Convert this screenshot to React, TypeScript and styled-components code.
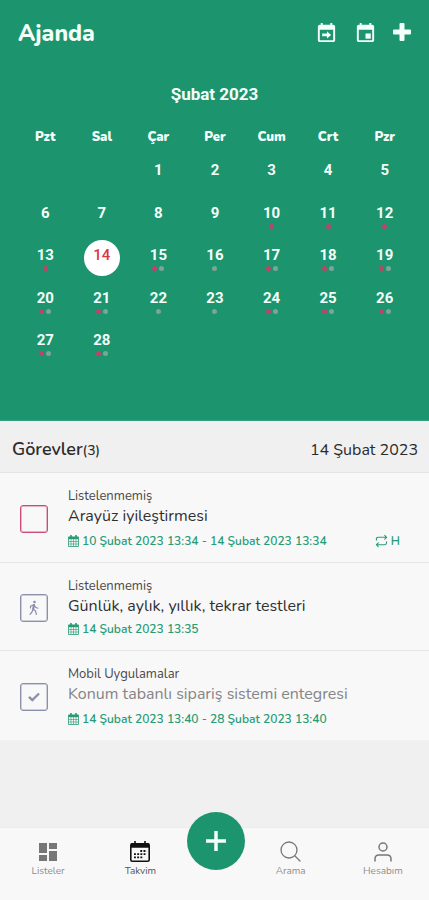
import React from "react";
import styled, { createGlobalStyle } from "styled-components";

const GlobalStyle = createGlobalStyle`
  *, *::before, *::after { box-sizing: border-box; }
  body { margin: 0; background: #f0f0f0; font-family: Nunito, "Open Sans", "Noto Sans", sans-serif; }
  button { font: inherit; color: inherit; background: none; border: 0; padding: 0; cursor: pointer; }
  h1, h2, p, ul { margin: 0; padding: 0; }
  svg { display: block; }
`;

const Page = styled.div`
  display: flex;
  flex-direction: column;
  min-height: 100vh;
`;

const CalendarPanel = styled.header`
  padding-bottom: 59px;
  background: #1c946e;
  color: #f4fffa;
  border-bottom: 1px solid #34a07d;
`;

const TopBar = styled.div`
  display: flex;
  align-items: center;
  justify-content: space-between;
  height: 64px;
  padding: 0 18px;
`;

const AppTitle = styled.h1`
  padding-top: 4px;
  font-size: 23px;
  line-height: 30px;
  font-weight: 800;
`;

const Actions = styled.div`
  display: flex;
  align-items: center;
  gap: 16px;
`;

const IconButton = styled.button`
  flex: none;
`;

const MonthTitle = styled.h2`
  margin-top: 18px;
  text-align: center;
  font: 700 17px/24px Roboto, sans-serif;
`;

const MonthTable = styled.table`
  width: calc(100% - 33px);
  margin: 21px 16px 0 17px;
  table-layout: fixed;
  border-collapse: collapse;
  text-align: center;
`;

const Weekday = styled.th`
  height: 28px;
  padding: 0;
  vertical-align: top;
  font-size: 13px;
  line-height: 20px;
  font-weight: 900;
`;

const Week = styled.tr`
  height: 42px;
  &:nth-child(odd) { height: 43px; }
  &:last-child { height: 36px; }
`;

const DayCell = styled.td`
  padding: 0;
  vertical-align: top;
`;

const Day = styled.button<{ $selected?: boolean }>`
  display: flex;
  flex-direction: column;
  align-items: center;
  width: 36px;
  height: 36px;
  margin: 0 auto;
  padding-top: 6px;
  border-radius: 50%;
  background: ${(p) => (p.$selected ? "#fff" : "transparent")};
  color: ${(p) => (p.$selected ? "#d8393f" : "inherit")};
  font: ${(p) => (p.$selected ? 500 : 700)} 15px/18px Roboto, sans-serif;
`;

const Dots = styled.span`
  display: flex;
  gap: 2px;
  margin-top: 2px;
`;

const Dot = styled.i<{ $tone: string }>`
  width: 5px;
  height: 5px;
  border-radius: 50%;
  background: ${(p) => (p.$tone === "r" ? "#bd4468" : "#7ba596")};
`;

const ListHeader = styled.div`
  display: flex;
  align-items: center;
  justify-content: space-between;
  height: 52px;
  padding: 6px 11px 0 12px;
  border-bottom: 1px solid #e4e4e4;
  color: #2b2b2b;
`;

const ListTitle = styled.h2`
  font-size: 18px;
  line-height: 24px;
  font-weight: 600;
`;

const Count = styled.span`
  font-size: 14px;
  font-weight: 500;
`;

const DateLabel = styled.span`
  font-size: 16px;
  line-height: 24px;
`;

const Tasks = styled.ul`
  flex: 1;
  list-style: none;
`;

const Task = styled.li`
  display: flex;
  align-items: center;
  padding: 13px 29px 11px 20px;
  background: #f8f8f8;
  border-bottom: 1px solid #e6e6e6;
  &:last-child { border-bottom-color: #f2f2f2; }
`;

const Check = styled.label`
  display: grid;
  place-items: center;
  flex: none;
  margin-right: 20px;
  color: #8a90ab;
  > * { grid-area: 1 / 1; }
  > svg { pointer-events: none; }
`;

const CheckInput = styled.input<{ $color: string }>`
  appearance: none;
  width: 28px;
  height: 28px;
  margin: 0;
  border: 1px solid ${(p) => p.$color};
  box-shadow: inset 0 0 0 1px ${(p) => p.$color}66;
  border-radius: 3px;
`;

const TaskText = styled.div`
  flex: 1;
`;

const Category = styled.p`
  font-size: 13px;
  line-height: 20px;
  color: #484848;
`;

const TaskTitle = styled.p<{ $done?: boolean }>`
  font-size: 16px;
  line-height: 20px;
  color: ${(p) => (p.$done ? "#858585" : "#303030")};
`;

const TaskMeta = styled.div<{ $range?: boolean }>`
  display: flex;
  align-items: center;
  justify-content: space-between;
  margin-top: ${(p) => (p.$range ? 5 : 3)}px;
  font-size: 12px;
  line-height: 20px;
  font-weight: 600;
  color: #279b75;
`;

const MetaPart = styled.span`
  display: flex;
  align-items: center;
  gap: 3px;
`;

const Nav = styled.nav`
  position: sticky;
  bottom: 0;
  display: flex;
  align-items: flex-start;
  height: 73px;
  padding-left: 2px;
  background: #f8f8f8;
  border-top: 1px solid #ececec;
`;

const NavItem = styled.button<{ $active?: boolean }>`
  flex: 1;
  display: flex;
  flex-direction: column;
  align-items: center;
  padding-top: 12px;
  font-size: 10px;
  line-height: 16px;
  color: ${(p) => (p.$active ? "#565656" : "#8e8e8e")};
`;

const NavIcon = styled.span<{ $active?: boolean }>`
  display: grid;
  place-items: center;
  height: 23px;
  color: ${(p) => (p.$active ? "#111" : "#777")};
`;

const AddButton = styled.button`
  display: grid;
  place-items: center;
  flex: none;
  width: 58px;
  height: 58px;
  margin-top: -16px;
  border-radius: 50%;
  background: #1c946e;
  color: #f4fffa;
`;

const EVENT = "M19 4h-1V2h-2v2H8V2H6v2H5c-1.1 0-2 .9-2 2v14c0 1.1.9 2 2 2h14c1.1 0 2-.9 2-2V6c0-1.1-.9-2-2-2zm0 16H5V9h14z";

const GoToDateIcon = () => (
  <svg width="23" height="23" viewBox="0 0 24 24" fill="currentColor">
    <path d={EVENT} />
    <path d="M7.500 13h5v-2.200l4.300 3.700-4.300 3.700V16h-5z" />
  </svg>
);

const TodayIcon = () => (
  <svg width="23" height="23" viewBox="0 0 24 24" fill="currentColor">
    <path d={EVENT} />
    <path d="M12 13h5.500v5.500H12z" />
  </svg>
);

const PlusIcon = () => (
  <svg width="18" height="18" viewBox="0 0 18 18" fill="currentColor">
    <path d="M7.500 0h3q1 0 1 1v5.500H17q1 0 1 1v3q0 1-1 1h-5.500V17q0 1-1 1h-3q-1 0-1-1v-5.500H1q-1 0-1-1v-3q0-1 1-1h5.500V1q0-1 1-1z" />
  </svg>
);

const MiniCalendar = () => (
  <svg width="11" height="12" viewBox="0 0 11 12" fill="none" stroke="currentColor">
    <path d="M.5 2h10v9.500H.5z" strokeWidth=".8" />
    <path d="M.5 3h10" strokeWidth="2.400" />
    <path d="M3 0v3M8 0v3" strokeWidth="1.600" />
    <path d="M.5 6.500h10M.5 9h10M3 4v7M5.500 4v7M8 4v7" strokeWidth=".6" />
  </svg>
);

const RepeatIcon = () => (
  <svg width="13" height="14" viewBox="0 0 14 14" fill="none" stroke="currentColor" strokeWidth="1.200" strokeLinecap="round" strokeLinejoin="round">
    <path d="M1.500 6V5q0-2 2-2h9M10.500 1l2 2-2 2M12.500 8v1q0 2-2 2h-9M3.500 9l-2 2 2 2" />
  </svg>
);

const WalkIcon = () => (
  <svg width="14" height="16" viewBox="0 0 14 16" fill="none" stroke="currentColor" strokeWidth="1.200" strokeLinecap="round" strokeLinejoin="round">
    <circle cx="7.500" cy="2" r="1.300" fill="currentColor" stroke="none" />
    <path d="M3.500 8V6.300L7 4.600l1.500 2.600 2.300 1M6.900 5L6 9l2.500 2 .9 3.500M5.800 9.500L5 12l-2 2.300" />
    <path d="M7 5l-.7 4" strokeWidth="2" />
  </svg>
);

const CheckIcon = () => (
  <svg width="12" height="10" viewBox="0 0 12 10" fill="none" stroke="currentColor" strokeWidth="2.400">
    <path d="M1 4.800L4.300 8 11 1.500" />
  </svg>
);

const DashboardIcon = () => (
  <svg width="18" height="18" viewBox="0 0 18 18" fill="currentColor">
    <path d="M0 0h8v10H0zM10 0h8v6h-8zM0 12h8v6H0zM10 8h8v10h-8z" />
  </svg>
);

const MonthIcon = () => (
  <svg width="20" height="21" viewBox="0 0 20 21" fill="none" stroke="currentColor">
    <rect x=".8" y="2.800" width="18.400" height="17.400" rx="1.500" strokeWidth="1.600" />
    <path d="M1 4.500h18" strokeWidth="4.500" />
    <path d="M5 0v4M15 0v4" strokeWidth="1.600" />
    <path d="M10.300 10h6.500M4 13.200h12.800M4 16.400h9.600" strokeWidth="1.800" strokeDasharray="1.900 1.300" />
  </svg>
);

const SearchIcon = () => (
  <svg width="21" height="21" viewBox="0 0 21 21" fill="none" stroke="currentColor" strokeWidth="1.300" strokeLinecap="round">
    <circle cx="9" cy="9" r="8" />
    <path d="M15 15l5 5" />
  </svg>
);

const PersonIcon = () => (
  <svg width="18" height="20" viewBox="0 0 18 20" fill="none" stroke="currentColor" strokeWidth="1.500" strokeLinecap="round">
    <circle cx="9" cy="5" r="4" />
    <path d="M1 19v-2q0-4 4-4h8q4 0 4 4v2" />
  </svg>
);

const WEEKDAYS = ["Pzt", "Sal", "Çar", "Per", "Cum", "Crt", "Pzr"];
const FIRST_OFFSET = 2;
const SELECTED = 14;

const dotsFor = (day: number): string => {
  if (day < 10 || day === SELECTED) return "";
  if (day <= 13) return "r";
  return [16, 22, 23].includes(day) ? "g" : "rg";
};

const WEEKS = [0, 1, 2, 3, 4].map((week) =>
  WEEKDAYS.map((_, column) => {
    const day = week * 7 + column + 1 - FIRST_OFFSET;
    return day >= 1 && day <= 28 ? day : null;
  })
);

const TASKS = [
  { category: "Listelenmemiş", title: "Arayüz iyileştirmesi", date: "10 Şubat 2023 13:34 - 14 Şubat 2023 13:34", range: true, repeat: "H", color: "#c94d74", icon: null, done: false },
  { category: "Listelenmemiş", title: "Günlük, aylık, yıllık, tekrar testleri", date: "14 Şubat 2023 13:35", range: false, repeat: "", color: "#8a90ab", icon: <WalkIcon />, done: false },
  { category: "Mobil Uygulamalar", title: "Konum tabanlı sipariş sistemi entegresi", date: "14 Şubat 2023 13:40 - 28 Şubat 2023 13:40", range: true, repeat: "", color: "#8a90ab", icon: <CheckIcon />, done: true },
];

export default function App() {
  return (
    <>
      <GlobalStyle />
      <Page>
        <CalendarPanel>
          <TopBar>
            <AppTitle>Ajanda</AppTitle>
            <Actions>
              <IconButton aria-label="Tarihe git"><GoToDateIcon /></IconButton>
              <IconButton aria-label="Bugün"><TodayIcon /></IconButton>
              <IconButton aria-label="Ekle"><PlusIcon /></IconButton>
            </Actions>
          </TopBar>
          <MonthTitle>Şubat 2023</MonthTitle>
          <MonthTable>
            <thead>
              <tr>{WEEKDAYS.map((name) => <Weekday key={name} scope="col">{name}</Weekday>)}</tr>
            </thead>
            <tbody>
              {WEEKS.map((week, index) => (
                <Week key={index}>
                  {week.map((day, column) => (
                    <DayCell key={column}>
                      {day && (
                        <Day $selected={day === SELECTED}>
                          {day}
                          <Dots>{dotsFor(day).split("").map((tone) => <Dot key={tone} $tone={tone} />)}</Dots>
                        </Day>
                      )}
                    </DayCell>
                  ))}
                </Week>
              ))}
            </tbody>
          </MonthTable>
        </CalendarPanel>

        <ListHeader>
          <ListTitle>Görevler<Count>(3)</Count></ListTitle>
          <DateLabel>14 Şubat 2023</DateLabel>
        </ListHeader>
        <Tasks>
          {TASKS.map((task) => (
            <Task key={task.title}>
              <Check>
                <CheckInput type="checkbox" $color={task.color} defaultChecked={task.done} aria-label={task.title} />
                {task.icon}
              </Check>
              <TaskText>
                <Category>{task.category}</Category>
                <TaskTitle $done={task.done}>{task.title}</TaskTitle>
                <TaskMeta $range={task.range}>
                  <MetaPart><MiniCalendar />{task.date}</MetaPart>
                  {task.repeat && <MetaPart><RepeatIcon />{task.repeat}</MetaPart>}
                </TaskMeta>
              </TaskText>
            </Task>
          ))}
        </Tasks>

        <Nav>
          <NavItem><NavIcon><DashboardIcon /></NavIcon>Listeler</NavItem>
          <NavItem $active aria-current="page"><NavIcon $active><MonthIcon /></NavIcon>Takvim</NavItem>
          <AddButton aria-label="Yeni görev">
            <svg width="20" height="20" viewBox="0 0 20 20" stroke="currentColor" strokeWidth="3.500"><path d="M10 0v20M0 10h20" /></svg>
          </AddButton>
          <NavItem><NavIcon><SearchIcon /></NavIcon>Arama</NavItem>
          <NavItem><NavIcon><PersonIcon /></NavIcon>Hesabım</NavItem>
        </Nav>
      </Page>
    </>
  );
}
